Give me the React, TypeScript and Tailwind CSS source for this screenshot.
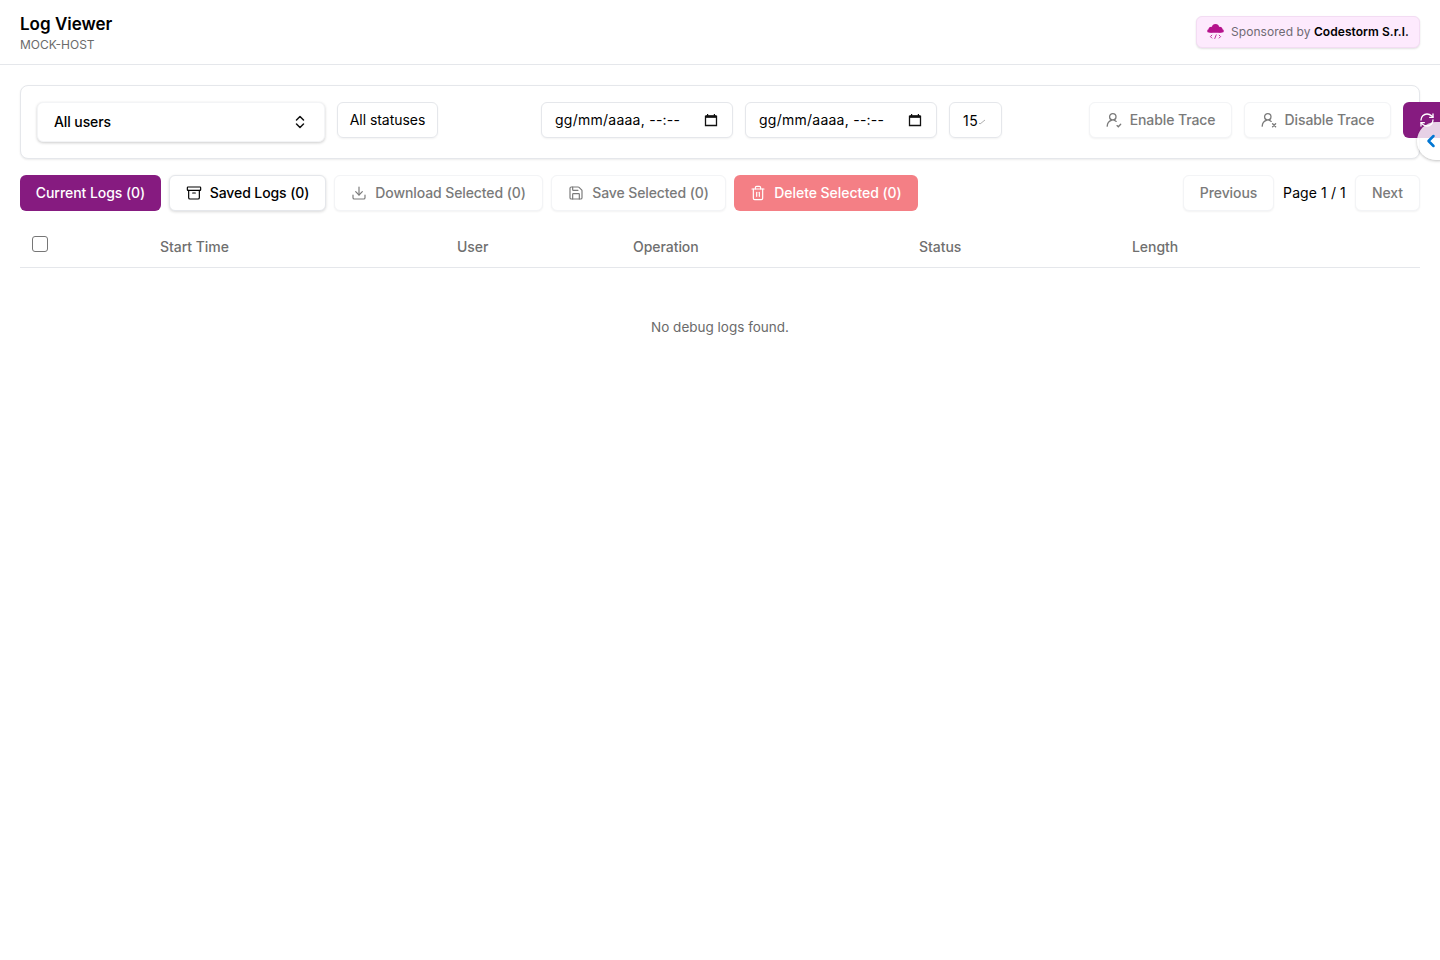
import { Archive, ChevronLeft, Download, RefreshCw, Save, Trash2 } from "lucide-react";

const font = { fontFamily: "Inter, 'Noto Sans', sans-serif" };

function CloudLogo() {
  return (
    <svg viewBox="0 0 18 18" className="h-[17px] w-[17px] shrink-0" fill="#b5128c">
      <circle cx="9" cy="4.8" r="3.8" />
      <circle cx="4.6" cy="7" r="3" />
      <circle cx="13.4" cy="7" r="3" />
      <circle cx="1.9" cy="8.4" r="1.7" />
      <circle cx="16.1" cy="8.4" r="1.7" />
      <rect x="2" y="7.4" width="14" height="3" rx="1.4" />
      <g fill="none" stroke="#b5128c" strokeWidth="0.9">
        <path d="M5.4 12.6 3.6 14.4l1.8 1.8" />
        <path d="M12.6 12.6l1.8 1.8-1.8 1.8" />
        <path d="M9.9 12.2 8.1 16.8" />
      </g>
    </svg>
  );
}

function TraceIcon({ off }: { off?: boolean }) {
  return (
    <svg viewBox="0 0 16 16" className="h-4 w-4 shrink-0" fill="none" stroke="currentColor" strokeWidth="1.3" strokeLinecap="round">
      <circle cx="6.8" cy="4.8" r="3.2" />
      <path d="M1.2 14.2c.2-3 2-5.2 4.2-5.8" />
      <path d="M8.2 8.4c.8.2 1.4.5 2 1" />
      {off ? (
        <path d="M11.6 11.8l3 3M14.6 11.8l-3 3" strokeWidth="1.4" />
      ) : (
        <path d="M11 13.6l1.3 1.2 2.4-2.6" />
      )}
    </svg>
  );
}

function CalendarIcon() {
  return (
    <svg viewBox="0 0 14 14" className="h-[14px] w-[14px] shrink-0" fill="none">
      <path d="M1.5 3.5h11v9h-11z" stroke="#111" strokeWidth="1.3" />
      <path d="M1.5 2.2h11v2.6h-11z" fill="#111" />
      <path d="M3.6 1v2M10.4 1v2" stroke="#111" strokeWidth="1.2" />
    </svg>
  );
}

function DateField() {
  return (
    <div className="flex h-9 w-[192px] items-center justify-between rounded-md border border-gray-200 bg-white pl-[13px] pr-[14px] text-sm tracking-[0.25px] text-black shadow-[0_1px_2px_rgba(0,0,0,0.05)]">
      <span className="whitespace-nowrap">gg/mm/aaaa, --:--</span>
      <CalendarIcon />
    </div>
  );
}

function GhostButton({ icon, label, className }: { icon?: React.ReactNode; label: string; className?: string }) {
  return (
    <button
      className={`flex h-9 items-center justify-center gap-2 whitespace-nowrap rounded-md border border-gray-100 bg-white text-sm font-medium tracking-[-0.1px] text-[#7a7a7a] shadow-[0_1px_2px_rgba(0,0,0,0.05)] ${className ?? ""}`}
    >
      {icon}
      {label}
    </button>
  );
}

export default function App() {
  return (
    <div style={font} className="relative h-[960px] w-[1440px] overflow-hidden bg-white">
      {/* Header */}
      <header className="flex h-[65px] items-center justify-between border-b border-gray-200 px-5">
        <div className="-mt-[2px]">
          <h1 className="text-[17px] leading-7 font-semibold text-black">Log Viewer</h1>
          <p className="-mt-[1px] text-xs leading-4 text-[#6b6b6b]">MOCK-HOST</p>
        </div>
        <div className="-mt-[1px] flex h-8 w-[224px] items-center gap-[7px] rounded-md border border-[#f3dcf3] bg-[#fdeafd] pl-[10px] text-xs tracking-[0.06px] text-[#6f6a73] shadow-[0_1px_2px_rgba(0,0,0,0.12)]">
          <CloudLogo />
          <span className="whitespace-nowrap">
            Sponsored by <span className="font-semibold text-black">Codestorm S.r.l.</span>
          </span>
        </div>
      </header>

      <main className="px-5 pt-5">
        {/* Filters */}
        <section className="flex h-[74px] items-start rounded-lg border border-gray-200 bg-white p-4 shadow-[0_1px_2px_rgba(0,0,0,0.08)]">
          <div className="flex h-10 w-[288px] shrink-0 items-center justify-between rounded-md border border-gray-100 bg-white pl-4 pr-[19px] text-sm font-medium tracking-[-0.1px] text-black shadow-[0_1px_3px_rgba(0,0,0,0.2)]">
            <span>All users</span>
            <svg viewBox="0 0 10 16" className="h-4 w-[10px]" fill="none" stroke="#111" strokeWidth="1.5" strokeLinecap="round" strokeLinejoin="round">
              <path d="M1.5 6 5 2.5 8.5 6" />
              <path d="M1.5 10 5 13.5 8.5 10" />
            </svg>
          </div>
          <div className="ml-3 flex h-9 w-[101px] shrink-0 items-center justify-center rounded-md border border-gray-200 text-sm tracking-[-0.05px] text-black shadow-[0_1px_2px_rgba(0,0,0,0.05)]">
            All statuses
          </div>
          <div className="ml-[103px] flex shrink-0 gap-3">
            <DateField />
            <DateField />
            <div className="flex h-9 w-[53px] items-center rounded-md border border-gray-200 pl-[13px] text-sm tracking-[0.6px] text-black shadow-[0_1px_2px_rgba(0,0,0,0.05)]">
              <span className="mt-[2px]">15</span>
              <svg viewBox="0 0 8 6" className="mt-[3px] h-[6px] w-2" fill="none" stroke="#999" strokeWidth="0.8">
                <path d="M1 4 2 5l5-4" />
              </svg>
            </div>
          </div>
          <div className="ml-[87px] flex shrink-0 gap-3">
            <GhostButton icon={<TraceIcon />} label="Enable Trace" className="w-[143px]" />
            <GhostButton icon={<TraceIcon off />} label="Disable Trace" className="w-[147px]" />
            <button className="flex h-9 w-[48px] items-center justify-center rounded-md bg-[#861b80] text-white">
              <RefreshCw className="h-4 w-4" strokeWidth={2} />
            </button>
          </div>
        </section>

        {/* Actions */}
        <div className="mt-4 flex items-center justify-between">
          <div className="flex items-center gap-2">
            <button className="flex h-9 w-[141px] items-center justify-center whitespace-nowrap rounded-md bg-[#861b80] text-sm font-medium tracking-[-0.05px] text-white">
              Current Logs (0)
            </button>
            <button className="flex h-9 w-[157px] items-center justify-center gap-2 whitespace-nowrap rounded-md border border-gray-200 bg-white text-sm font-medium tracking-[-0.1px] text-black shadow-[0_1px_3px_rgba(0,0,0,0.15)]">
              <Archive className="h-4 w-4" strokeWidth={1.75} />
              Saved Logs (0)
            </button>
            <GhostButton icon={<Download className="h-4 w-4" strokeWidth={1.75} />} label="Download Selected (0)" className="w-[209px]" />
            <GhostButton icon={<Save className="h-4 w-4" strokeWidth={1.75} />} label="Save Selected (0)" className="w-[175px]" />
            <button className="flex h-9 w-[184px] items-center justify-center gap-2 whitespace-nowrap rounded-md bg-[#f47f85] text-sm font-medium tracking-[-0.05px] text-white">
              <Trash2 className="h-4 w-4" strokeWidth={1.75} />
              Delete Selected (0)
            </button>
          </div>
          <div className="flex items-center gap-2">
            <GhostButton label="Previous" className="w-[91px]" />
            <span className="w-[65px] whitespace-nowrap text-center text-sm tracking-[0.1px] text-black">Page 1 / 1</span>
            <GhostButton label="Next" className="w-[65px]" />
          </div>
        </div>

        {/* Table */}
        <div className="mt-4 grid h-[41px] grid-cols-[128px_297px_176px_286px_213px_300px] items-center border-b border-gray-200 text-sm font-medium tracking-[-0.05px] text-[#6f6f6f]">
          <div className="-mt-[7px] pl-3">
            <div className="h-4 w-4 rounded-[3px] border border-[#767676] bg-white" />
          </div>
          <div className="px-3">Start Time</div>
          <div className="px-3">User</div>
          <div className="px-3">Operation</div>
          <div className="px-3">Status</div>
          <div className="px-3">Length</div>
        </div>
        <p className="mt-[49px] text-center text-[13.5px] leading-5 text-[#6b6b6b]">No debug logs found.</p>
      </main>

      {/* Side panel toggle */}
      <button className="absolute left-[1417px] top-[122px] flex h-[38px] w-[40px] items-center rounded-full bg-white/80 pl-[4px] text-[#0176d3] shadow-[0_1px_3px_rgba(0,0,0,0.25)]">
        <ChevronLeft className="h-5 w-5" strokeWidth={3} />
      </button>
    </div>
  );
}
